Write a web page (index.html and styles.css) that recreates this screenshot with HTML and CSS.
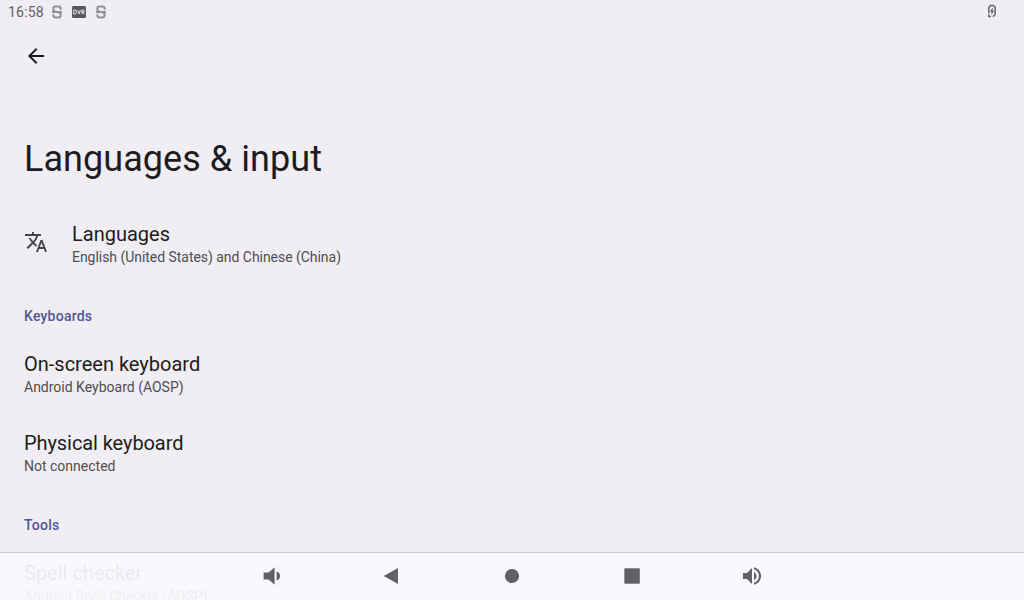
FILE: index.html
```html
<!DOCTYPE html>
<html lang="en">
<head>
<meta charset="utf-8">
<title>Languages &amp; input</title>
<link rel="stylesheet" href="styles.css">
</head>
<body>
<div class="screen">
  <header class="status">
    <span class="clock">16:58</span>
    <svg class="s-icon" viewBox="0 0 12 14"><path d="M9.700 4.800V4Q9.700 1.600 7.500 1.600H4.500Q2.300 1.600 2.300 3.900T4.500 6.200M2.300 9.300V10Q2.300 12.400 4.500 12.400H7.500Q9.700 12.400 9.700 10T7.500 7.500M1 7H11"/></svg>
    <span class="dvr"><svg viewBox="0 0 14 12"><path d="M1.700 4H3Q4.500 4 4.500 6T3 8H1.700ZM5.700 4L7.100 8L8.500 4M9.900 8.400V4H12V6.200H9.900M11 6.200L12.300 8.400"/></svg></span>
    <svg class="s-icon" viewBox="0 0 12 14"><path d="M9.700 4.800V4Q9.700 1.600 7.500 1.600H4.500Q2.300 1.600 2.300 3.900T4.500 6.200M2.300 9.300V10Q2.300 12.400 4.500 12.400H7.500Q9.700 12.400 9.700 10T7.500 7.500M1 7H11"/></svg>
    <svg class="battery" viewBox="0 0 8 14"><path class="shell" d="M.8 9.600V3.200L2.500 1.400H5.500L7.200 3.200V10.500L5 12.600M.8 10.400V12.600H2.800"/><path class="bolt" d="M5 3L2 7.800H3.700L3.200 11.200L6.100 6.400H4.400Z"/></svg>
  </header>
  <div class="appbar">
    <svg class="back" viewBox="0 0 24 24"><path d="M20 11H7.830l5.590-5.590L12 4l-8 8 8 8 1.410-1.410L7.830 13H20v-2z"/></svg>
  </div>
  <h1 class="title">Languages &amp; input</h1>
  <main class="list">
    <section class="item with-icon">
      <svg class="translate" viewBox="0 0 24 24"><path d="M12.870 15.070l-2.540-2.510.03-.03c1.740-1.940 2.980-4.170 3.710-6.530H17V4h-7V2H8v2H1v1.990h11.170C11.500 7.920 10.440 9.750 9 11.350 8.070 10.320 7.300 9.190 6.690 8h-2c.73 1.630 1.730 3.170 2.980 4.560l-5.090 5.020L4 19l5-5 3.110 3.110.76-2.040zM18.500 10h-2L12 22h2l1.120-3h4.750L21 22h2l-4.500-12zm-2.620 7l1.620-4.330L19.120 17h-3.240z"/></svg>
      <div><div class="name">Languages</div><div class="summary tight">English (United States) and Chinese (China)</div></div>
    </section>
    <h2 class="category">Keyboards</h2>
    <section class="item"><div class="name">On-screen keyboard</div><div class="summary">Android Keyboard (AOSP)</div></section>
    <section class="item"><div class="name tight">Physical keyboard</div><div class="summary">Not connected</div></section>
    <h2 class="category">Tools</h2>
    <section class="item"><div class="name">Spell checker</div><div class="summary spell">Android Spell Checker (AOSP)</div></section>
  </main>
  <nav class="navbar">
    <svg viewBox="0 0 24 24"><path d="M3.600 8.500v7h5l6 5.300V3.200l-6 5.300H3.600z"/><path d="M16.600 7.500v9c2.500-.7 3.400-2.400 3.400-4.500S19.100 8.200 16.600 7.500z"/></svg>
    <svg viewBox="0 0 24 24"><path d="M3.700 12L18 4v16z"/></svg>
    <svg viewBox="0 0 24 24"><circle cx="12" cy="12" r="7.100"/></svg>
    <svg viewBox="0 0 24 24"><rect x="4.300" y="4.200" width="15.500" height="15.600" rx="1"/></svg>
    <svg viewBox="0 0 24 24"><path d="M3 9v6h4l5 5V4L7 9H3zm13.500 3c0-1.770-1.020-3.290-2.500-4.030v8.050c1.480-.73 2.500-2.250 2.500-4.020zM14 3.230v2.060c2.890.86 5 3.540 5 6.710s-2.110 5.850-5 6.710v2.060c4.010-.91 7-4.490 7-8.770s-2.990-7.860-7-8.770z"/></svg>
  </nav>
</div>
</body>
</html>
```
FILE: styles.css
```css
body {
  margin: 0;
  font-family: Roboto, sans-serif;
  background: #f0eef3;
  color: #1d1c20;
}
.screen {
  position: relative;
  box-sizing: border-box;
  width: 1024px;
  height: 600px;
  overflow: hidden;
}
.status {
  display: flex;
  align-items: center;
  height: 24px;
  padding: 0 28px 0 8px;
  color: #626166;
}
.clock {
  width: 43px;
  font-size: 14px;
  letter-spacing: 0.2px;
}
.s-icon {
  width: 12px;
  height: 14px;
  fill: none;
  stroke: #929196;
  stroke-width: 2;
}
.dvr {
  display: flex;
  width: 14px;
  height: 12px;
  margin: 0 9px;
  border-radius: 1.5px;
  background: #58575b;
}
.dvr svg {
  width: 14px;
  height: 12px;
  fill: none;
  stroke: #f0eef4;
  stroke-width: 0.9;
}
.battery {
  width: 8px;
  height: 14px;
  margin: -2px 0 0 auto;
}
.shell {
  fill: none;
  stroke: #66656a;
  stroke-width: 1.5;
}
.bolt {
  fill: #5c5b60;
}
.appbar {
  display: flex;
  align-items: center;
  height: 64px;
  padding-left: 24px;
}
.back {
  width: 24px;
  height: 24px;
  fill: #1b1b1f;
}
.title {
  margin: 49px 0 0 24px;
  font-size: 36px;
  font-weight: 400;
  line-height: 44px;
  letter-spacing: 0.05px;
}
.list {
  padding: 23px 24px 0;
}
.item {
  height: 61px;
  padding-top: 18px;
}
.with-icon {
  display: flex;
  gap: 24px;
}
.translate {
  width: 24px;
  height: 24px;
  margin-top: 8px;
  fill: #46464f;
}
.name {
  font-size: 20px;
  line-height: 24px;
}
.summary {
  font-size: 14px;
  line-height: 16px;
  margin-top: 3px;
  color: #4e4d53;
}
.tight {
  letter-spacing: -0.04px;
}
.name.tight,
.spell {
  letter-spacing: -0.08px;
}
.category {
  height: 20px;
  margin: 0;
  padding: 23px 0 8px;
  color: #4c5899;
  font-size: 14px;
  font-weight: 500;
  line-height: 20px;
  letter-spacing: 0.23px;
}
.navbar {
  position: absolute;
  inset: 552px 0 0;
  display: flex;
  justify-content: center;
  align-items: flex-start;
  gap: 96px;
  padding-top: 11px;
  border-top: 1px solid #d1cfd5;
  background: rgba(251, 249, 252, 0.93);
}
.navbar svg {
  width: 24px;
  height: 24px;
  fill: #626166;
}
```
